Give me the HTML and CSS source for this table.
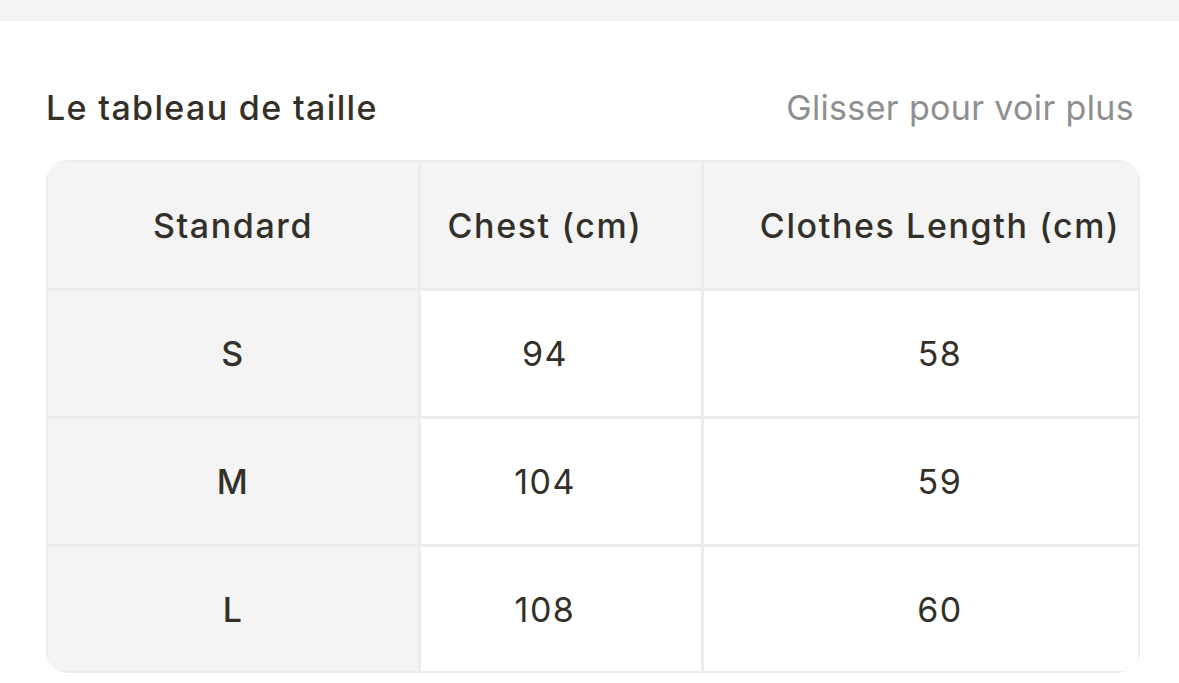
FILE: index.html
```html
<!DOCTYPE html>
<html lang="fr">
<head>
<meta charset="utf-8">
<title>Le tableau de taille</title>
<link rel="stylesheet" href="styles.css">
</head>
<body>
<div class="topbar"></div>
<section class="size-section">
  <div class="section-head">
    <h2 class="title">Le tableau de taille</h2>
    <span class="hint">Glisser pour voir plus</span>
  </div>
  <div class="size-table">
    <div class="cell head c1">Standard</div>
    <div class="cell head c2">Chest (cm)</div>
    <div class="cell head c3">Clothes Length (cm)</div>

    <div class="cell label c1">S</div>
    <div class="cell c2">94</div>
    <div class="cell c3">58</div>

    <div class="cell label c1">M</div>
    <div class="cell c2">104</div>
    <div class="cell c3">59</div>

    <div class="cell label c1">L</div>
    <div class="cell c2">108</div>
    <div class="cell c3">60</div>
  </div>
</section>
</body>
</html>
```

FILE: styles.css
```css
html, body {
  margin: 0;
  padding: 0;
  background: #ffffff;
}
body {
  font-family: "Inter", "Noto Sans", sans-serif;
  color: #33302a;
}
.topbar {
  height: 20px;
  background: #f4f4f4;
  border-bottom: 1px solid #efefef;
}
.size-section {
  padding: 0 39px 0 46px;
}
.section-head {
  display: flex;
  justify-content: space-between;
  align-items: center;
  box-sizing: border-box;
  height: 139px;
  padding-top: 35px;
}
.title {
  margin: 0;
  font-size: 34px;
  font-weight: 500;
  letter-spacing: 1.35px;
  line-height: 40px;
}
.hint {
  font-size: 34px;
  color: #8f8f8f;
  letter-spacing: 0.35px;
  line-height: 40px;
  margin-right: 6px;
}
.size-table {
  display: grid;
  grid-template-columns: 370px 280px 434px;
  grid-template-rows: 126px 125px 125px 124px;
  gap: 3px;
  padding: 2px;
  background: #ececec;
  border-radius: 22px;
  overflow: hidden;
}
.cell {
  display: flex;
  align-items: center;
  justify-content: center;
  background: #ffffff;
  font-size: 34px;
  font-weight: 400;
  letter-spacing: 1.5px;
}
.cell.head {
  background: #f4f4f4;
  font-weight: 500;
  letter-spacing: 1.6px;
}
.cell.label {
  background: #f4f4f4;
  font-weight: 500;
}
.cell.c2 {
  padding-right: 32px;
}
.cell.c3 {
  padding-left: 38px;
}
```
